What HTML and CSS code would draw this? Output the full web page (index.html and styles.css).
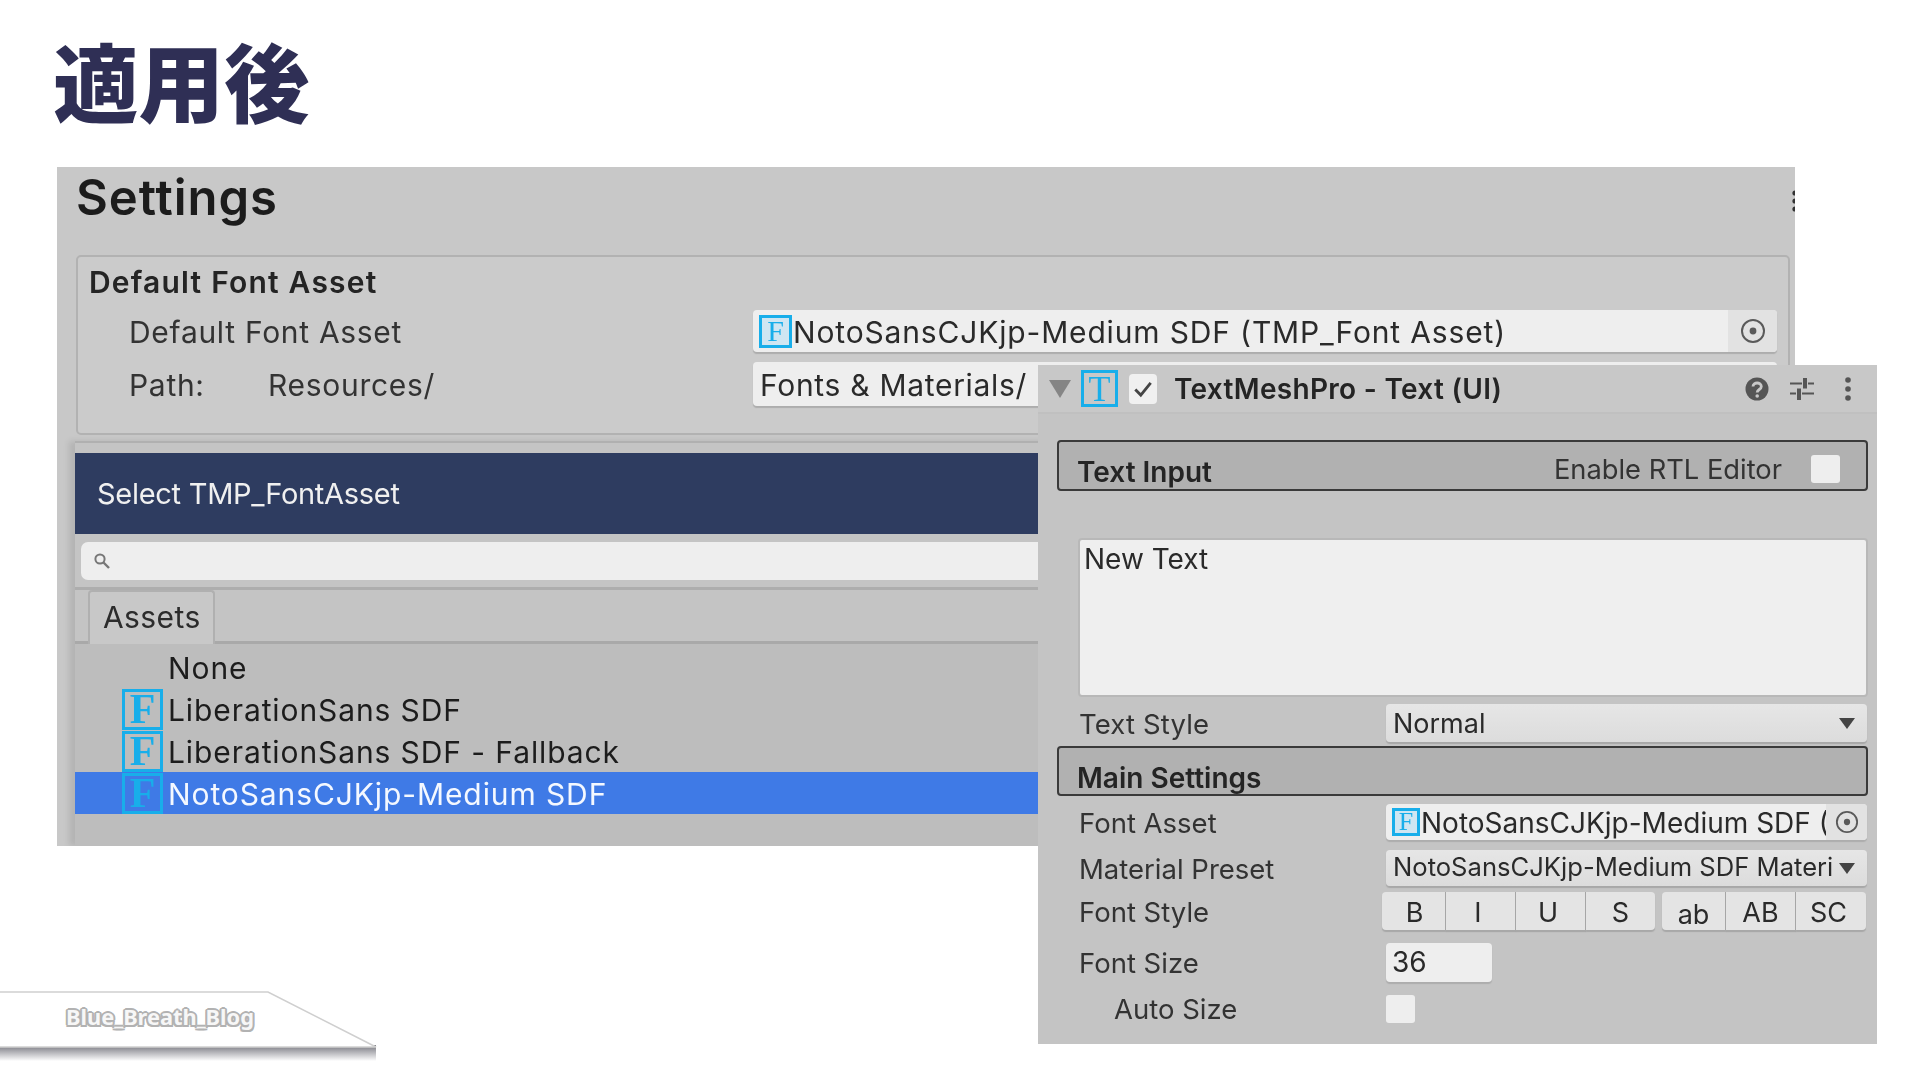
FILE: index.html
```html
<!DOCTYPE html>
<html lang="ja">
<head>
<meta charset="utf-8">
<title>適用後</title>
<link rel="stylesheet" href="styles.css">
</head>
<body>
<h1 class="page-title">適用後</h1>

<section class="win win-left">
  <header class="settings-head">
    <h2 class="settings-title">Settings</h2>
    <svg class="edge-icon" width="5" height="24" viewBox="0 0 5 24"><circle cx="3" cy="4" r="2.6"/><circle cx="3" cy="12" r="2.6"/><circle cx="3" cy="20" r="2.6"/></svg>
  </header>
  <div class="group">
    <div class="group-title">Default Font Asset</div>
    <div class="group-row">
      <span class="lbl">Default Font Asset</span>
      <div class="field field-main">
        <span class="asset-icon asset-lg">F</span>
        <span class="field-text">NotoSansCJKjp-Medium SDF (TMP_Font Asset)</span>
        <span class="picker picker-lg"><svg width="26" height="26" viewBox="0 0 26 26"><circle cx="13" cy="13" r="11" fill="none" stroke="#5a5a5a" stroke-width="2"/><circle cx="13" cy="13" r="3.4" fill="#5a5a5a"/></svg></span>
      </div>
    </div>
    <div class="group-row group-row-2">
      <span class="lbl path-lbl"><span class="path-key">Path:</span><span>Resources/</span></span>
      <div class="field field-path"><span class="path-text">Fonts &amp; Materials/</span></div>
    </div>
  </div>
  <div class="dialog">
    <div class="dialog-bar">Select TMP_FontAsset</div>
    <div class="search">
      <svg width="18" height="18" viewBox="0 0 18 18"><circle cx="7" cy="7" r="4.6" fill="none" stroke="#777" stroke-width="2"/><path d="M10.5 10.5 16 16" stroke="#777" stroke-width="2.4"/></svg>
    </div>
    <div class="tabs"><span class="tab">Assets</span></div>
    <ul class="list">
      <li class="item"><span class="item-icon-empty"></span><span class="item-text">None</span></li>
      <li class="item"><span class="asset-icon asset-list">F</span><span class="item-text">LiberationSans SDF</span></li>
      <li class="item"><span class="asset-icon asset-list">F</span><span class="item-text">LiberationSans SDF - Fallback</span></li>
      <li class="item item-selected"><span class="asset-icon asset-list">F</span><span class="item-text">NotoSansCJKjp-Medium SDF</span></li>
    </ul>
  </div>
</section>

<section class="win win-right">
  <header class="comp-head">
    <svg class="fold" width="22" height="18" viewBox="0 0 22 18"><path d="M0 0H22L11 18Z" fill="#858585"/></svg>
    <span class="t-icon">T</span>
    <span class="check"><svg width="22" height="20" viewBox="0 0 20 18"><path d="M3 9.5 8 14.5 17 3.5" fill="none" stroke="#444" stroke-width="2.6"/></svg></span>
    <span class="comp-title">TextMeshPro - Text (UI)</span>
    <span class="comp-tools">
      <svg width="24" height="24" viewBox="0 0 24 24"><circle cx="12" cy="12" r="11.5" fill="#555"/><path d="M8 9.5C8 4.8 16.3 4.8 16.3 9.5 16.3 12.6 12.2 12.4 12.2 15.5" fill="none" stroke="#c8c8c8" stroke-width="2.8"/><circle cx="12.2" cy="19" r="1.8" fill="#c8c8c8"/></svg>
      <svg width="26" height="24" viewBox="0 0 26 24"><path d="M1 6.5H13M19 6.5H25M1 16.5H7M13 16.5H25" stroke="#555" stroke-width="2"/><path d="M16 1V11.5M10 11.5V23" stroke="#555" stroke-width="4"/></svg>
      <svg class="dots" width="6" height="24" viewBox="0 0 6 24"><circle cx="3" cy="3" r="2.8" fill="#555"/><circle cx="3" cy="12" r="2.8" fill="#555"/><circle cx="3" cy="21" r="2.8" fill="#555"/></svg>
    </span>
  </header>
  <div class="bar bar-input">
    <span class="bar-title">Text Input</span>
    <span class="rtl"><span>Enable RTL Editor</span><span class="box box-rtl"></span></span>
  </div>
  <div class="textarea">New Text</div>
  <div class="row row-style">
    <span class="rlbl">Text Style</span>
    <div class="popup"><span class="popup-text">Normal</span><svg class="arrow" width="16" height="11" viewBox="0 0 16 11"><path d="M0 0H16L8 11Z" fill="#444"/></svg></div>
  </div>
  <div class="bar bar-main"><span class="bar-title">Main Settings</span></div>
  <div class="row row-asset">
    <span class="rlbl">Font Asset</span>
    <div class="field field-asset">
      <span class="asset-icon asset-sm">F</span>
      <span class="field-text-sm">NotoSansCJKjp-Medium SDF (TMP_Font Asset)</span>
      <span class="picker picker-sm"><svg width="24" height="24" viewBox="0 0 26 26"><circle cx="13" cy="13" r="11" fill="none" stroke="#5a5a5a" stroke-width="2"/><circle cx="13" cy="13" r="3.4" fill="#5a5a5a"/></svg></span>
    </div>
  </div>
  <div class="row row-material">
    <span class="rlbl">Material Preset</span>
    <div class="popup popup-mat"><span class="popup-text mat-text">NotoSansCJKjp-Medium SDF Material</span><svg class="arrow" width="16" height="11" viewBox="0 0 16 11"><path d="M0 0H16L8 11Z" fill="#444"/></svg></div>
  </div>
  <div class="row row-fontstyle">
    <span class="rlbl">Font Style</span>
    <div class="btns">
      <span class="btn btn-64 btn-b">B</span><span class="btn btn-70 btn-shift">I</span><span class="btn btn-70 btn-shift">U</span><span class="btn btn-69 btn-end">S</span>
      <span class="btn btn-64 btn-low">ab</span><span class="btn btn-70">AB</span><span class="btn btn-70 btn-end btn-shift">SC</span>
    </div>
  </div>
  <div class="row row-size">
    <span class="rlbl">Font Size</span>
    <div class="num">36</div>
  </div>
  <div class="row row-auto">
    <span class="rlbl rlbl-in">Auto Size</span>
    <span class="box box-auto"></span>
  </div>
</section>

<aside class="ribbon">
  <svg class="ribbon-art" width="378" height="72" viewBox="0 0 378 72">
    <defs><linearGradient id="rs" x1="0" y1="0" x2="0" y2="1"><stop offset="0" stop-color="#77777f"/><stop offset="1" stop-color="#fff"/></linearGradient></defs>
    <rect x="0" y="54" width="376" height="16" fill="url(#rs)"/>
    <path d="M-2 1H268L376 56H-2Z" fill="#fff" stroke="#cfcfcf" stroke-width="1.5"/>
  </svg>
  <span class="ribbon-text">Blue_Breath_Blog</span>
</aside>
</body>
</html>
```

FILE: styles.css
```css
* { box-sizing: border-box; }
html, body { margin: 0; padding: 0; }
body {
  position: relative;
  width: 1920px;
  height: 1080px;
  overflow: hidden;
  background: #fff;
  font-family: Inter, "Liberation Sans", sans-serif;
  color: #1e1e1e;
}
.page-title {
  margin: 0;
  padding: 23px 0 0 53px;
  font: 900 85.5px/112px "Noto Sans CJK JP", sans-serif;
  color: #2f2f55;
  filter: blur(0.4px);
}

.win { position: absolute; overflow: hidden; filter: blur(0.65px); }
.win-left { left: 57px; top: 167px; width: 1738px; height: 679px; background: #c8c8c8; }
.win-right { left: 1038px; top: 365px; width: 839px; height: 679px; background: #c4c4c4; }

/* Left window */
.settings-head { display: flex; justify-content: space-between; height: 88px; padding: 4px 0 0 19px; }
.settings-title { margin: 0; font-size: 49px; line-height: 1.1; font-weight: 600; letter-spacing: 0.95px; color: #1c1c1c; }
.edge-icon { margin: 18px -2px 0 0; fill: #333; }
.group {
  width: 1714px; height: 180px; margin-left: 19px;
  background: #cbcbcb; border: 2px solid #b2b2b2; border-radius: 5px;
}
.group-title { height: 53px; padding-left: 11px; font-size: 30px; line-height: 50px; font-weight: 600; letter-spacing: 1.2px; color: #242424; }
.group-row { display: grid; grid-template-columns: 624px 1024px; padding-left: 51px; align-items: center; font-size: 30px; letter-spacing: 0.7px; color: #333; }
.group-row-2 { margin-top: 10px; }
.lbl { display: flex; padding-top: 2px; }
.path-key { width: 139px; }
.field { display: flex; align-items: center; background: #eeeeee; border-radius: 4px; overflow: hidden; box-shadow: 0 2px 1px #adadad; }
.field-main { height: 42px; padding-left: 6px; }
.field-path { height: 44px; padding-left: 7px; }
.field-text { flex: 1; padding: 2px 0 0 1px; font-size: 30px; letter-spacing: 0.84px; color: #2a2a2a; white-space: nowrap; }
.path-text { padding-top: 2px; font-size: 30px; color: #2a2a2a; }
.picker { display: flex; align-items: center; justify-content: center; height: 100%; background: #e2e2e2; letter-spacing: 0; }
.picker-lg { width: 49px; }
.picker-sm { width: 41px; }

.asset-icon {
  display: flex; align-items: center; justify-content: center; flex: none;
  border: 3px solid #18aeea; color: #18aeea;
  font-family: "Liberation Serif", serif; font-weight: 700; letter-spacing: 0;
}
.asset-lg { width: 33px; height: 33px; font-size: 30px; font-weight: 400; background: #cfe6f2; }
.asset-sm { width: 28px; height: 28px; font-size: 26px; font-weight: 400; background: #cfe6f2; }
.asset-list { width: 41px; height: 41px; font-size: 42px; line-height: 1; }

.dialog { width: 1730px; height: 405px; margin: 6px 0 0 18px; padding-top: 10px; border-top: 2px solid #b0b0b0; box-shadow: -6px 0 6px rgba(0, 0, 0, .1); background: #c4c4c4; }
.dialog-bar { height: 81px; padding-left: 22px; background: #2e3c60; color: #f0f0f0; font-size: 29px; line-height: 81px; letter-spacing: -0.28px; }
.search { display: flex; align-items: center; height: 38px; margin: 8px 0 0 6px; padding-left: 12px; background: #eeeeee; border-radius: 7px 0 0 7px; }
.tabs { display: flex; height: 57px; margin-top: 7px; padding: 0 0 0 13px; border-top: 3px solid #adadad; border-bottom: 3px solid #a9a9a9; }
.tab { width: 127px; height: 54px; padding-left: 13px; background: #c8c8c8; border: 2px solid #b0b0b0; border-bottom: 0; border-radius: 4px 4px 0 0; font-size: 30px; line-height: 51px; letter-spacing: 0.4px; color: #2c2c2c; }
.list { height: 204px; margin: 0; padding: 2px 0 0; list-style: none; background: #bdbdbd; }
.item { display: flex; align-items: center; height: 42px; padding-left: 47px; font-size: 30px; letter-spacing: 0.9px; color: #1c1c1c; }
.item-text { padding-top: 2px; }
.item-icon-empty { width: 46px; flex: none; }
.item .asset-icon { margin-right: 5px; }
.item-selected { background: #3f7ae6; color: #f4f8ff; }

/* Right window */
.comp-head { display: flex; align-items: center; height: 49px; padding-left: 11px; background: #c8c8c8; border-bottom: 2px solid #c0c0c0; }
.fold { margin-right: 10px; }
.t-icon {
  display: flex; align-items: center; justify-content: center;
  width: 37px; height: 37px; margin-right: 11px;
  border: 3px solid #18aeea; color: #18aeea;
  font: 400 36px/1 "Liberation Serif", serif;
}
.check { display: flex; align-items: center; justify-content: center; width: 28px; height: 30px; background: #f0f0f0; border-radius: 4px; }
.comp-title { margin-left: 17px; font-size: 28px; font-weight: 600; letter-spacing: 0.3px; color: #242424; }
.comp-tools { display: flex; align-items: center; gap: 20px; margin-left: auto; padding-right: 26px; }
.dots { margin-left: 10px; }

.bar { display: flex; justify-content: space-between; margin: 0 9px 0 19px; background: #b1b1b1; border: 2.5px solid #3a3a3a; border-radius: 4px; padding: 0 26px 0 18px; }
.bar-input { height: 51px; margin-top: 26px; }
.bar-main { height: 50px; margin-top: 4px; }
.bar-title { padding-top: 13px; font-size: 28px; line-height: 34px; font-weight: 600; color: #242424; }
.rtl { display: flex; gap: 29px; align-items: center; padding-top: 7px; font-size: 27.3px; color: #333; }
.box { display: block; background: #eeeeee; border-radius: 3px; }
.box-rtl { width: 29px; height: 28px; }
.box-auto { width: 29px; height: 28px; }

.textarea { height: 159px; margin: 47px 9px 0 40px; padding: 2px 4px; background: #efefef; border: 2px solid #b8b8b8; border-radius: 4px; font-size: 28px; line-height: 34px; color: #2a2a2a; }

.row { display: grid; grid-template-columns: 307px 481px; align-items: center; padding-left: 41px; }
.rlbl { font-size: 27.5px; color: #333; }
.rlbl-in { padding-left: 35px; }
.row-style { height: 38px; margin-top: 7px; }
.row-style .rlbl { padding-top: 2px; letter-spacing: 0.15px; }
.row-asset { height: 36px; margin-top: 7px; }
.row-asset .rlbl { padding-top: 3px; }
.row-material { height: 34px; margin-top: 11px; }
.row-material .rlbl { padding-top: 2px; }
.row-fontstyle { height: 38px; margin-top: 8px; }
.row-fontstyle .rlbl { padding-top: 2px; }
.row-size { height: 37px; margin-top: 13px; }
.row-auto { height: 28px; margin-top: 12px; }

.popup { display: flex; align-items: center; justify-content: space-between; height: 100%; padding: 0 12px 0 7px; background: linear-gradient(#e6e6e6, #dcdcdc); border-radius: 4px; box-shadow: 0 2px 1px #a8a8a8; }
.popup-text { font-size: 27px; color: #2a2a2a; white-space: nowrap; overflow: hidden; }
.popup-mat { gap: 6px; }
.mat-text { flex: 1; padding-bottom: 4px; font-size: 25.6px; }
.arrow { flex: none; }
.field-asset { height: 36px; padding-left: 6px; }
.field-text-sm { flex: 1; min-width: 0; padding: 3px 0 0 1px; font-size: 28px; color: #2a2a2a; white-space: nowrap; overflow: hidden; }

.btns { display: flex; margin-left: -4px; width: 484px; height: 38px; }
.btn { display: flex; align-items: center; justify-content: center; height: 100%; padding-top: 2px; background: #e4e4e4; border-right: 1px solid #a6a6a6; box-shadow: 0 2px 1px #a8a8a8; font-size: 27px; color: #2a2a2a; flex: none; }
.btn-64 { width: 64px; border-radius: 4px 0 0 4px; }
.btn-70 { width: 70px; }
.btn-69 { width: 69px; }
.btn-end { border-right: 0; border-radius: 0 4px 4px 0; }
.btn-b { padding-left: 2px; }
.btn-shift { padding-right: 5px; }
.btn-low { margin-left: 7px; padding-top: 6px; }
.num { width: 106px; height: 100%; padding-left: 6px; background: #eeeeee; border-radius: 4px; box-shadow: 0 2px 1px #adadad; font-size: 28px; line-height: 39px; color: #2a2a2a; }

/* Watermark */
.ribbon { position: absolute; left: 0; top: 991px; width: 378px; height: 72px; }
.ribbon-art { position: absolute; left: 0; top: 0; }
.ribbon-text {
  position: absolute; left: 66px; top: 11px;
  font: 700 21.8px/30px "Noto Sans", sans-serif;
  color: #f7f7f7;
  text-shadow: 2px 0 #b2b2b2, -2px 0 #b2b2b2, 0 2px #b2b2b2, 0 -2px #b2b2b2, 1.5px 1.5px #b2b2b2, -1.5px -1.5px #b2b2b2, 1.5px -1.5px #b2b2b2, -1.5px 1.5px #b2b2b2;
}
```
